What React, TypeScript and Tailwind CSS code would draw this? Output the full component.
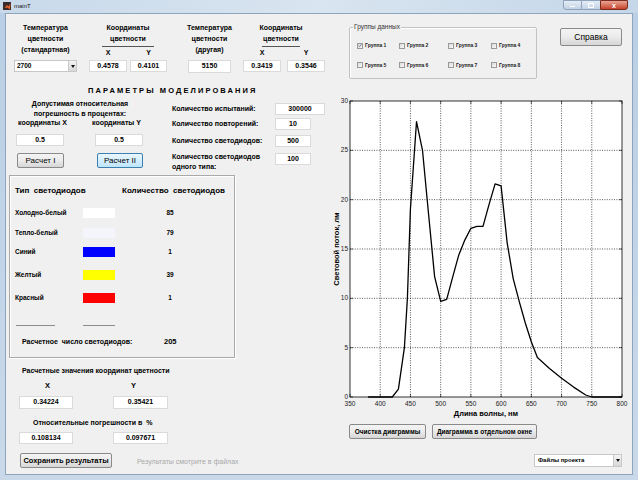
import React from 'react'

const data: [number, number][] = [
  [380, 0], [420, 0], [430, 0.8], [440, 5], [445, 10], [450, 19], [460, 27.9], [470, 25],
  [480, 18.5], [490, 12.2], [500, 9.7], [510, 9.9], [520, 12.2], [530, 14.4], [540, 15.9],
  [550, 17.1], [560, 17.3], [570, 17.3], [580, 19.5], [590, 21.6], [600, 21.4], [610, 15.6],
  [620, 12], [630, 9.7], [640, 7.5], [650, 5.6], [660, 4], [680, 2.9], [700, 1.9],
  [720, 1.0], [740, 0.2], [750, 0], [800, 0],
]

const xs = (l: number) => 20 + ((l - 350) / 450) * 272
const ys = (v: number) => 305 - (v / 30) * 296

function Box({ className = '', children }: { className?: string; children?: React.ReactNode }) {
  return (
    <div className={`bg-white border border-[#dadada] flex items-center justify-center text-[7px] font-bold text-black ${className}`}>
      {children}
    </div>
  )
}

function Btn({ className = '', children, focused = false }: { className?: string; children?: React.ReactNode; focused?: boolean }) {
  return (
    <div
      className={`rounded-[2px] border flex items-center justify-center text-black ${
        focused
          ? 'border-[#3c7fb1] bg-linear-to-b from-[#eaf6fd] to-[#bee6fd]'
          : 'border-[#8a8a8a] bg-linear-to-b from-[#f4f4f4] via-[#ebebeb] to-[#d6d6d6]'
      } ${className}`}
    >
      {children}
    </div>
  )
}

function Check({ label, checked = false }: { label: string; checked?: boolean }) {
  return (
    <div className="flex items-center gap-[2px]">
      <div className="w-[6px] h-[6px] border border-[#9a9a9a] bg-linear-to-br from-[#dcdcdc] to-[#f8f8f8] flex items-center justify-center">
        {checked && (
          <svg width="5" height="5" viewBox="0 0 5 5">
            <path d="M0.6 2.6 L2 4 L4.4 0.8" stroke="#4a5a80" strokeWidth="0.9" fill="none" />
          </svg>
        )}
      </div>
      <span className="text-[5px] font-bold text-[#222]">{label}</span>
    </div>
  )
}

function Arrow() {
  return (
    <div className="w-[8px] h-full bg-linear-to-b from-[#f4f4f4] to-[#d8d8d8] border-l border-[#c8c8c8] flex items-center justify-center">
      <svg width="4" height="3" viewBox="0 0 4 3">
        <path d="M0 0 L4 0 L2 3 Z" fill="#111" />
      </svg>
    </div>
  )
}

function Chart() {
  const xt = [350, 400, 450, 500, 550, 600, 650, 700, 750, 800]
  const yt = [0, 5, 10, 15, 20, 25, 30]
  const pts = data.map(([l, v]) => `${xs(l).toFixed(1)},${ys(v).toFixed(1)}`).join(' ')
  return (
    <svg width="302" height="330" viewBox="0 0 302 330" className="block">
      <rect x="20" y="9" width="272" height="296" fill="#fff" stroke="#000" strokeWidth="0.8" />
      {xt.slice(1, -1).map((l) => (
        <line key={l} x1={xs(l)} x2={xs(l)} y1={9} y2={305} stroke="#111" strokeWidth="0.7" strokeDasharray="1 1.4" />
      ))}
      {yt.slice(1, -1).map((v) => (
        <line key={v} x1={20} x2={292} y1={ys(v)} y2={ys(v)} stroke="#111" strokeWidth="0.7" strokeDasharray="1 1.4" />
      ))}
      {xt.map((l) => (
        <g key={'t' + l}>
          <line x1={xs(l)} x2={xs(l)} y1={305} y2={302} stroke="#000" strokeWidth="0.6" />
          <line x1={xs(l)} x2={xs(l)} y1={9} y2={12} stroke="#000" strokeWidth="0.6" />
          <text x={xs(l)} y={314} fontSize="6.5" textAnchor="middle" fill="#222">{l}</text>
        </g>
      ))}
      {yt.map((v) => (
        <g key={'y' + v}>
          <line x1={20} x2={23} y1={ys(v)} y2={ys(v)} stroke="#000" strokeWidth="0.6" />
          <line x1={289} x2={292} y1={ys(v)} y2={ys(v)} stroke="#000" strokeWidth="0.6" />
          <text x={18} y={ys(v) + 2} fontSize="6.5" textAnchor="end" fill="#222">{v}</text>
        </g>
      ))}
      <polyline points={pts} fill="none" stroke="#000" strokeWidth="1.3" strokeLinejoin="round" />
      <text x={156} y={324} fontSize="7.5" fontWeight="bold" textAnchor="middle" fill="#000">Длина волны, нм</text>
      <text x={9} y={157} fontSize="7.5" fontWeight="bold" textAnchor="middle" fill="#000" transform="rotate(-90 9 157)">
        Световой поток, лм
      </text>
    </svg>
  )
}

const leds = [
  { name: 'Холодно-белый', color: 'bg-white', count: '85', mt: 'mt-[12px]' },
  { name: 'Тепло-белый', color: 'bg-[#f3f5fb]', count: '79', mt: 'mt-[10px]' },
  { name: 'Синий', color: 'bg-[#0000ff]', count: '1', mt: 'mt-[9px]' },
  { name: 'Желтый', color: 'bg-[#ffff00]', count: '39', mt: 'mt-[13px]' },
  { name: 'Красный', color: 'bg-[#ff0000]', count: '1', mt: 'mt-[13px]' },
]

export default function App() {
  return (
    <div className="w-[638px] h-[480px] flex flex-col bg-linear-to-b from-[#b9cfe5] to-[#c9d9ea] font-['Liberation_Sans',Arial,sans-serif] text-black select-none overflow-hidden">
      {/* title bar */}
      <div className="h-[13px] flex items-start bg-linear-to-r from-[#c8d9ea] via-[#d9e5f0] to-[#c4d6e8]">
        <div className="ml-[3px] mt-[2px] w-[8px] h-[8px] bg-[#3a2a2a] flex items-center justify-center">
          <svg width="7" height="7" viewBox="0 0 7 7">
            <path d="M0.5 5 L3 2 L4.5 3.5 L6.5 0.5 L6 6.5 L3.5 4.5 Z" fill="#e8632a" />
          </svg>
        </div>
        <span className="ml-[3px] mt-[3px] text-[6px] leading-[7px] text-[#111]">mainT</span>
        <div className="flex-1" />
        <div className="flex mr-[10px]">
          <div className="w-[19px] h-[10px] border border-[#8ea3bb] rounded-bl-[3px] bg-linear-to-b from-[#e4edf6] to-[#c3d3e4] flex items-center justify-center">
            <div className="w-[5px] h-[1.5px] bg-white mt-[3px]" />
          </div>
          <div className="w-[18px] h-[10px] border-y border-[#8ea3bb] bg-linear-to-b from-[#e4edf6] to-[#c3d3e4] flex items-center justify-center">
            <div className="w-[6px] h-[5px] border border-white" />
          </div>
          <div className="w-[28px] h-[10px] border border-[#7a2a20] rounded-br-[3px] bg-linear-to-b from-[#e8a493] to-[#c5402a] flex items-center justify-center text-[7px] leading-[7px] text-white font-bold">
            x
          </div>
        </div>
      </div>

      <div className="flex-1 px-[5px] pb-[5px] flex">
        <div className="flex-1 border border-[#8fa5bd] bg-[#f0f0f0] flex flex-col">
          {/* top row */}
          <div className="h-[66px] flex items-start">
            <div className="ml-[8px] w-[63px] pt-[7.5px] flex flex-col items-center">
              <div className="h-[38.5px] text-[7px] font-bold leading-[11px] text-center whitespace-nowrap">
                Температура<br />цветности<br />(стандартная)
              </div>
              <div className="w-[63px] h-[12px] bg-white border border-[#c8c8c8] flex items-center justify-between">
                <span className="ml-[2px] text-[6.5px] font-bold">2700</span>
                <Arrow />
              </div>
            </div>

            <div className="ml-[12px] w-[78px] pt-[7.5px] flex flex-col items-center">
              <div className="text-[7px] font-bold leading-[11px] text-center whitespace-nowrap">
                Координаты<br />цветности
              </div>
              <div className="mt-[2px] w-[52px] h-px bg-[#555]" />
              <div className="mt-[1.5px] h-[10px] w-full flex text-[7px] font-bold leading-[10px]">
                <span className="w-[38px] text-center">X</span>
                <span className="ml-[3px] w-[37px] text-center">Y</span>
              </div>
              <div className="mt-[2px] w-full flex gap-[3px]">
                <Box className="w-[38px] h-[12px]">0.4578</Box>
                <Box className="w-[37px] h-[12px]">0.4101</Box>
              </div>
            </div>

            <div className="ml-[21px] w-[43px] pt-[7.5px] flex flex-col items-center">
              <div className="h-[38.5px] text-[7px] font-bold leading-[11px] text-center whitespace-nowrap">
                Температура<br />цветности<br />(другая)
              </div>
              <Box className="w-[43px] h-[13px]">5150</Box>
            </div>

            <div className="ml-[12px] w-[82px] pt-[7.5px] flex flex-col items-center">
              <div className="text-[7px] font-bold leading-[11px] text-center whitespace-nowrap -ml-[6px]">
                Координаты<br />цветности
              </div>
              <div className="mt-[2px] w-[38px] h-px bg-[#555] -ml-[6px]" />
              <div className="mt-[1.5px] h-[10px] w-full flex text-[7px] font-bold leading-[10px]">
                <span className="w-[38px] text-center">X</span>
                <span className="ml-[6px] w-[38px] text-center">Y</span>
              </div>
              <div className="mt-[2px] w-full flex gap-[6px]">
                <Box className="w-[38px] h-[12px]">0.3419</Box>
                <Box className="w-[38px] h-[12px]">0.3546</Box>
              </div>
            </div>

            {/* groups panel */}
            <div className="ml-[24px] mt-[13px] w-[188px] h-[52px] relative border border-[#c2c2c2] rounded-[2px] shadow-[inset_1px_1px_0_#fff]">
              <span className="absolute -top-[5px] left-[3px] px-[1px] bg-[#f0f0f0] text-[6.5px] leading-[8px] text-[#333]">
                Группы данных
              </span>
              <div className="pl-[7px] pt-[14px] flex flex-col gap-[12px]">
                <div className="flex">
                  <div className="w-[42px]"><Check label="Группа 1" checked /></div>
                  <div className="w-[49px]"><Check label="Группа 2" /></div>
                  <div className="w-[43px]"><Check label="Группа 3" /></div>
                  <Check label="Группа 4" />
                </div>
                <div className="flex">
                  <div className="w-[42px]"><Check label="Группа 5" /></div>
                  <div className="w-[49px]"><Check label="Группа 6" /></div>
                  <div className="w-[43px]"><Check label="Группа 7" /></div>
                  <Check label="Группа 8" />
                </div>
              </div>
            </div>

            <Btn className="ml-[23px] mt-[14px] w-[62px] h-[18px] text-[8.5px]">Справка</Btn>
          </div>

          {/* lower area */}
          <div className="flex-1 flex">
            {/* left column */}
            <div className="w-[324px] flex flex-col">
              <div className="mt-[6px] ml-[82px] h-[10px] leading-[10px] text-[7.5px] font-bold tracking-[2.1px] whitespace-nowrap">
                ПАРАМЕТРЫ МОДЕЛИРОВАНИЯ
              </div>

              <div className="h-[79px] flex items-start">
                <div className="w-[150px] mt-[3px] flex flex-col">
                  <div className="w-[148px] text-center text-[7px] font-bold leading-[9.5px]">
                    Допустимая относительная<br />погрешность в процентах:
                  </div>
                  <div className="h-[9.5px] flex text-[7px] font-bold leading-[9.5px] whitespace-nowrap">
                    <span className="ml-[12px] w-[74px] shrink-0">координаты X</span>
                    <span>координаты Y</span>
                  </div>
                  <div className="mt-[6.5px] flex">
                    <Box className="ml-[10px] w-[48px] h-[12px]">0.5</Box>
                    <Box className="ml-[31px] w-[48px] h-[12px]">0.5</Box>
                  </div>
                  <div className="mt-[7px] flex">
                    <Btn className="ml-[11px] w-[47px] h-[15px] text-[8px]">Расчет I</Btn>
                    <Btn focused className="ml-[33px] w-[46px] h-[15px] text-[8px]">Расчет II</Btn>
                  </div>
                </div>

                <div className="ml-[16px] mt-[7px] flex flex-col text-[7px] font-bold whitespace-nowrap">
                  <div className="h-[12px] flex items-center">
                    <span className="w-[103px]">Количество испытаний:</span>
                    <Box className="w-[50px] h-[12px]">300000</Box>
                  </div>
                  <div className="mt-[3px] h-[12px] flex items-center">
                    <span className="w-[103px]">Количество повторений:</span>
                    <Box className="w-[36px] h-[12px]">10</Box>
                  </div>
                  <div className="mt-[5px] h-[12px] flex items-center">
                    <span className="w-[103px]">Количество светодиодов:</span>
                    <Box className="w-[36px] h-[12px]">500</Box>
                  </div>
                  <div className="mt-[6px] flex items-start">
                    <span className="w-[103px] -mt-[1px] leading-[10px]">
                      Количество светодиодов<br />одного типа:
                    </span>
                    <Box className="w-[36px] h-[12px]">100</Box>
                  </div>
                </div>
              </div>

              {/* LED panel */}
              <div className="ml-[3px] w-[226px] h-[183px] border border-[#a9a9a9] shadow-[inset_1px_1px_0_#fff,1px_1px_0_#fff] flex flex-col pl-[5px] pt-[10px]">
                <div className="h-[10px] leading-[10px] flex text-[8px] font-bold whitespace-nowrap">
                  <span className="w-[107px]">Тип&nbsp; светодиодов</span>
                  <span>Количество&nbsp; светодиодов</span>
                </div>
                {leds.map((d) => (
                  <div key={d.name} className={`${d.mt} h-[10px] flex items-center text-[6.5px] font-bold`}>
                    <span className="w-[68px] whitespace-nowrap">{d.name}</span>
                    <div className={`w-[32px] h-[10px] ${d.color}`} />
                    <span className="w-[110px] text-center">{d.count}</span>
                  </div>
                ))}
                <div className="mt-[22px] h-px flex">
                  <div className="ml-[1px] w-[39px] h-px bg-[#8c8c8c]" />
                  <div className="ml-[28px] w-[32px] h-px bg-[#8c8c8c]" />
                </div>
                <div className="mt-[11px] h-[10px] flex items-center text-[7px] font-bold whitespace-nowrap">
                  <span className="ml-[7px] w-[142px]">Расчетное&nbsp; число светодиодов:</span>
                  <span className="text-[7.5px]">205</span>
                </div>
              </div>

              {/* results */}
              <div className="mt-[8px] ml-[16px] h-[10px] leading-[10px] text-[7px] font-bold whitespace-nowrap">
                Расчетные значения координат цветности
              </div>
              <div className="mt-[5px] h-[10px] leading-[10px] flex text-[7.5px] font-bold">
                <span className="ml-[39px] w-[86px]">X</span>
                <span>Y</span>
              </div>
              <div className="mt-[5px] flex">
                <Box className="ml-[13px] w-[54px] h-[13px]">0.34224</Box>
                <Box className="ml-[40px] w-[55px] h-[13px]">0.35421</Box>
              </div>
              <div className="mt-[9px] ml-[27px] h-[10px] leading-[10px] text-[7px] font-bold whitespace-nowrap">
                Относительные погрешности в&nbsp; %
              </div>
              <div className="mt-[4px] flex">
                <Box className="ml-[13px] w-[54px] h-[12px]">0.108134</Box>
                <Box className="ml-[40px] w-[55px] h-[12px]">0.097671</Box>
              </div>
              <div className="mt-[9px] flex items-center">
                <Btn className="ml-[14px] w-[92px] h-[15px] text-[7.5px] font-bold">Сохранить результаты</Btn>
                <span className="ml-[25px] mt-[3px] text-[7px] text-[#a8a8a8] whitespace-nowrap">
                  Результаты смотрите в файлах
                </span>
              </div>
            </div>

            {/* right column */}
            <div className="w-[302px] flex flex-col">
              <div className="mt-[12px]">
                <Chart />
              </div>
              <div className="mt-[2px] flex">
                <Btn className="ml-[19px] w-[77px] h-[15px] text-[6.5px] font-bold">Очистка диаграммы</Btn>
                <Btn className="ml-[6px] w-[105px] h-[15px] text-[6.5px] font-bold">Диаграмма в отдельном окне</Btn>
              </div>
              <div className="mt-[15px] ml-[204px] w-[88px] h-[13px] bg-white border border-[#c8c8c8] flex items-center justify-between">
                <span className="ml-[3px] text-[6px] font-bold">Файлы проекта</span>
                <Arrow />
              </div>
            </div>
          </div>
        </div>
      </div>
    </div>
  )
}
